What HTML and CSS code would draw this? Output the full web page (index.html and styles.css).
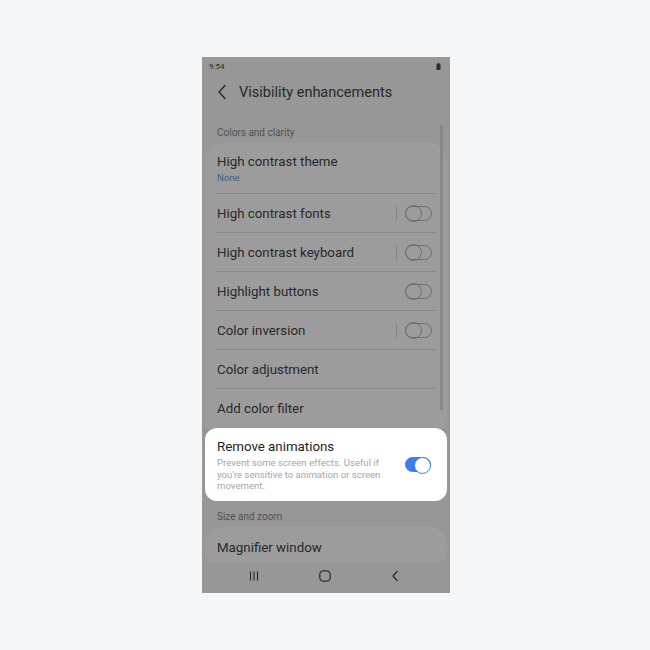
FILE: index.html
```html
<!DOCTYPE html>
<html>
<head>
<meta charset="utf-8">
<link rel="stylesheet" href="styles.css">
</head>
<body>
<div class="phone">
  <div class="status">
    <span>9:54</span>
    <svg class="battery" width="5" height="7" viewBox="0 0 5 7"><rect x="1.5" y="0" width="2" height="1" fill="#2e2e2e"/><rect x="0.5" y="1" width="4" height="6" rx="0.6" fill="#2e2e2e"/></svg>
  </div>
  <div class="header">
    <svg class="back" width="10" height="16" viewBox="0 0 10 16"><path d="M8 1.5 L2 8 L8 14.5" fill="none" stroke="#2a2a2a" stroke-width="1.4" stroke-linecap="round" stroke-linejoin="round"/></svg>
    <span class="title">Visibility enhancements</span>
  </div>
  <div class="subhead">Colors and clarity</div>
  <div class="card list">
    <div class="row first">
      <div class="row-text">
        <div class="name">High contrast theme</div>
        <div class="value">None</div>
      </div>
    </div>
    <div class="row"><div class="name">High contrast fonts</div><span class="vdiv"></span><span class="toggle"></span></div>
    <div class="row"><div class="name">High contrast keyboard</div><span class="vdiv"></span><span class="toggle"></span></div>
    <div class="row"><div class="name">Highlight buttons</div><span class="toggle"></span></div>
    <div class="row"><div class="name">Color inversion</div><span class="vdiv"></span><span class="toggle"></span></div>
    <div class="row"><div class="name">Color adjustment</div></div>
    <div class="row last"><div class="name">Add color filter</div></div>
  </div>
  <div class="card highlight">
    <div class="row-text">
      <div class="name">Remove animations</div>
      <div class="desc">Prevent some screen effects. Useful if you're sensitive to animation or screen movement.</div>
    </div>
    <span class="toggle on"></span>
  </div>
  <div class="subhead second">Size and zoom</div>
  <div class="card magnifier">
    <div class="name">Magnifier window</div>
  </div>
  <div class="navbar">
    <svg width="12" height="12" viewBox="0 0 12 12"><path d="M2.5 1.5v9M6 1.5v9M9.5 1.5v9" stroke="#2e2e2e" stroke-width="1.2"/></svg>
    <svg width="14" height="14" viewBox="0 0 14 14"><rect x="1.8" y="1.8" width="10.4" height="10.4" rx="3.6" fill="none" stroke="#2e2e2e" stroke-width="1.3"/></svg>
    <svg width="10" height="12" viewBox="0 0 10 12"><path d="M7 1.5 L3 6 L7 10.5" fill="none" stroke="#2e2e2e" stroke-width="1.3" stroke-linecap="round" stroke-linejoin="round"/></svg>
  </div>
  <div class="scrollbar"></div>
</div>
</body>
</html>
```
FILE: styles.css
```css
* { box-sizing: border-box; }
html, body { margin: 0; padding: 0; }
body {
  background: #f5f6f8;
  width: 650px;
  height: 650px;
  padding-top: 57px;
  padding-left: 202px;
  font-family: Roboto, "Noto Sans", sans-serif;
  color: #292929;
}
.phone {
  position: relative;
  width: 248px;
  height: 536px;
  background: #979797;
  overflow: hidden;
  display: flex;
  flex-direction: column;
}
.status {
  height: 18px;
  display: flex;
  align-items: center;
  justify-content: space-between;
  padding: 0 9px 0 7px;
  font-size: 8px;
  color: #2e2e2e;
}
.header {
  height: 34px;
  display: flex;
  align-items: center;
  padding-left: 15px;
}
.back { margin-right: 12px; }
.title { font-size: 14.5px; color: #292929; }
.subhead {
  height: 34px;
  display: flex;
  align-items: flex-end;
  padding: 0 0 5px 15px;
  font-size: 10px;
  color: #525252;
}
.card {
  margin: 0 3px;
  background: #9c9c9c;
  border-radius: 18px;
}
.list { border-radius: 18px 18px 0 0; }
.row {
  height: 39px;
  margin: 0 11px;
  border-bottom: 1px solid #8c8c8c;
  display: flex;
  align-items: center;
  padding-left: 1px;
}
.row.first { height: 51px; padding-top: 1px; }
.row.last { border-bottom: none; }
.name { font-size: 13.3px; color: #292929; flex: 1; }
.value { font-size: 9.5px; color: #3a5d8c; margin-top: 3px; }
.row-text { flex: 1; }
.vdiv {
  width: 1px;
  height: 15px;
  background: #858585;
  margin-right: 8px;
}
.toggle {
  position: relative;
  width: 27px;
  height: 15px;
  border: 1.2px solid #6e6e6e;
  border-radius: 8px;
  margin-right: 4px;
}
.toggle::after {
  content: "";
  position: absolute;
  left: -1.2px;
  top: -1.2px;
  width: 15px;
  height: 15px;
  border: 1.2px solid #6e6e6e;
  border-radius: 50%;
}
.toggle.on {
  background: #3f7cec;
  border-color: #3f7cec;
  width: 26px;
}
.toggle.on::after {
  left: auto;
  right: -1.2px;
  background: #fff;
  border-color: #3f7cec;
}
.highlight {
  background: #fff;
  border-radius: 12px;
  height: 73px;
  display: flex;
  align-items: center;
  padding: 0 12px 0 12px;
}
.highlight .name { font-size: 13.3px; color: #222; }
.highlight .desc {
  font-size: 9.6px;
  line-height: 11.8px;
  color: #a6a6a6;
  margin-top: 3px;
  width: 178px;
}
.highlight .row-text { padding-top: 2px; }
.subhead.second { height: 26px; padding-bottom: 5px; }
.magnifier {
  height: 40px;
  border-radius: 18px;
  display: flex;
  align-items: center;
  padding: 0 0 0 12px;
  margin-bottom: -5px;
}
.navbar {
  position: relative;
  z-index: 1;
  background: #979797;
  height: 31px;
  display: flex;
  align-items: center;
  justify-content: space-between;
  padding: 0 50px 3px 46px;
  margin-top: auto;
}
.scrollbar {
  position: absolute;
  left: 238px;
  top: 68px;
  width: 3px;
  height: 285px;
  border-radius: 2px;
  background: #888888;
}
```
